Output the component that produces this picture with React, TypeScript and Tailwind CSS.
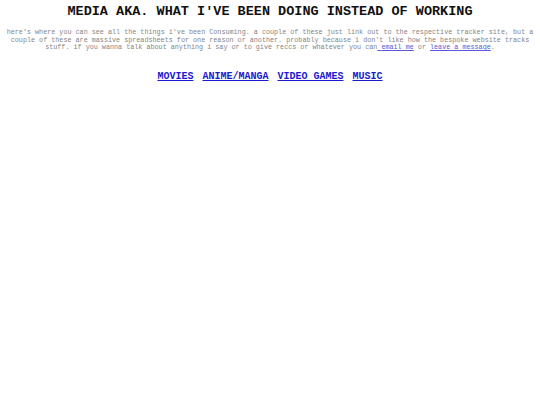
export default function App() {
  return (
    <div className="min-h-screen bg-white text-center font-['Liberation_Mono',monospace]">
      <h1 className="pt-[5px] text-[13.5px] font-bold leading-[14px] text-[#111]">
        MEDIA AKA. WHAT I'VE BEEN DOING INSTEAD OF WORKING
      </h1>
      <p className="mx-auto mt-[10px] px-[6px] text-[6.75px] leading-[7.6px] text-[#858585]">
        here's where you can see all the things i've been Consuming. a couple of these just link out to the respective
        tracker site, but a couple of these are massive spreadsheets for one reason or another. probably because i don't
        like how the bespoke website tracks stuff. if you wanna talk about anything i say or to give reccs or whatever you
        can
        <a href="#" className="text-[#5a5ad8] underline">
          {' '}email me
        </a>{' '}
        or{' '}
        <a href="#" className="text-[#5a5ad8] underline">
          leave a message
        </a>
        .
      </p>
      <nav className="mt-[19px] flex justify-center gap-[9px] text-[10px] font-bold leading-[12px]">
        <a href="#" className="text-[#1a1ad0] underline">MOVIES</a>
        <a href="#" className="text-[#1a1ad0] underline">ANIME/MANGA</a>
        <a href="#" className="text-[#1a1ad0] underline">VIDEO GAMES</a>
        <a href="#" className="text-[#1a1ad0] underline">MUSIC</a>
      </nav>
    </div>
  );
}
